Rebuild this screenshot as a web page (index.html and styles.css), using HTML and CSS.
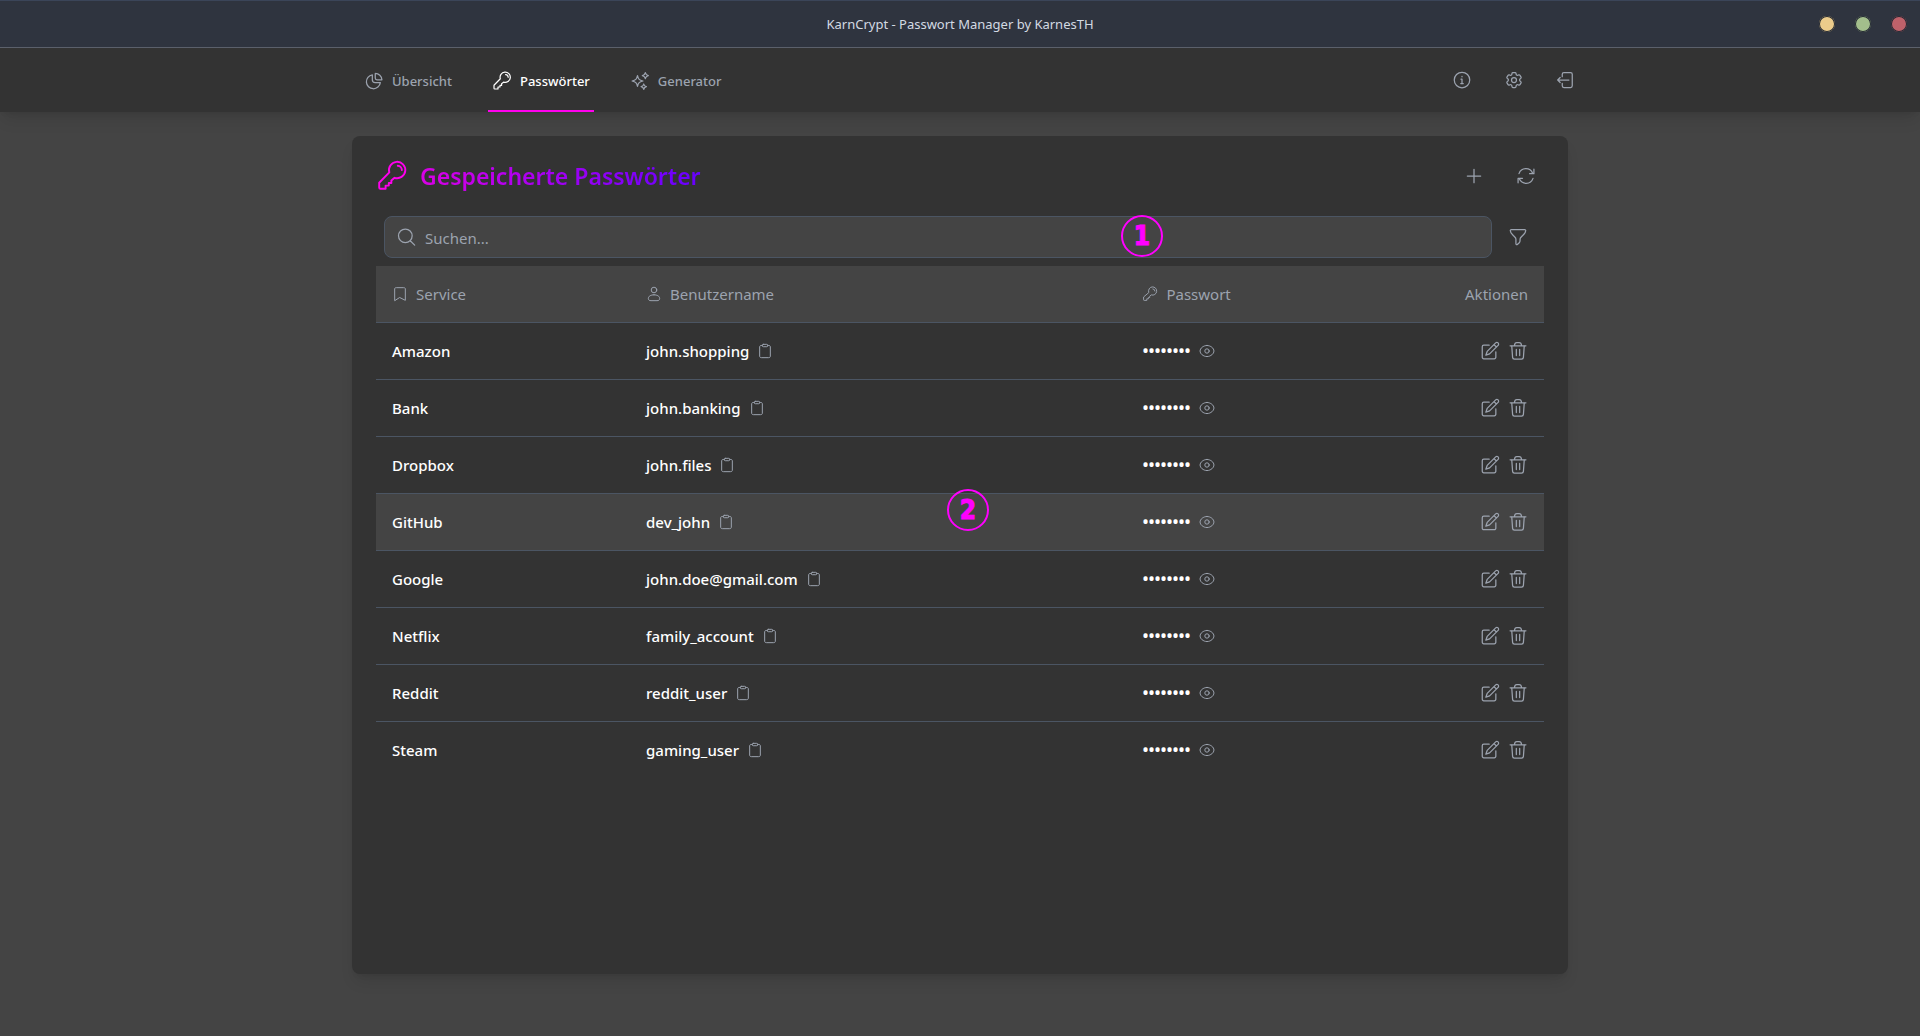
FILE: index.html
```html
<!DOCTYPE html>
<html lang="de">
<head>
<meta charset="utf-8">
<title>KarnCrypt - Passwort Manager by KarnesTH</title>
<link rel="stylesheet" href="styles.css">
</head>
<body>
<svg class="sprite" aria-hidden="true">
  <symbol id="pie" viewBox="0 0 24 24"><path d="M10 4.6a8.4 8.4 0 1 0 9.6 9.4h-6.2c-2.400 0-3.400-1-3.400-3.400Z"/><path d="M13.500 3v5.500c0 1.400.6 2 2 2h6A8 8 0 0 0 13.500 3Z"/></symbol>
  <symbol id="key" viewBox="-0.5 -0.5 25 25"><path d="M9.900 9.200A6.400 6.400 0 1 1 14 13.400L11.500 15.500V17.500H9.500V19.500H7V22H3A1 1 0 0 1 2 21V17.300Z"/><path d="M16.500 4A3.400 3.400 0 0 1 19.700 7.400"/></symbol>
  <symbol id="sparkles" viewBox="0 0 24 24"><path d="M9 5.500c1 4.300 2.200 5.500 6.500 6.500-4.300 1-5.500 2.200-6.500 6.500-1-4.300-2.200-5.500-6.500-6.500 4.300-1 5.500-2.200 6.500-6.500Z"/><path d="M18.400 2c.5 2.300 1.300 3.100 3.600 3.600-2.300.5-3.100 1.300-3.600 3.600-.5-2.300-1.300-3.100-3.600-3.600 2.300-.5 3.100-1.300 3.600-3.600Z"/><path d="M16.500 15.600c.4 2.100 1.100 2.800 3.200 3.200-2.100.4-2.800 1.100-3.200 3.200-.4-2.100-1.100-2.800-3.200-3.200 2.100-.4 2.800-1.100 3.200-3.200Z"/></symbol>
  <symbol id="info" viewBox="0 0 24 24"><circle cx="12" cy="12" r="9.300"/><path d="M10.800 11H12v5M10.500 16.200h3M12 7.500v.6"/></symbol>
  <symbol id="gear" viewBox="0 0 24 24"><path d="M9.594 3.940c.09-.542.56-.94 1.110-.94h2.593c.55 0 1.020.398 1.110.94l.213 1.281c.063.374.313.686.645.87.074.04.147.083.22.127.325.196.72.257 1.075.124l1.217-.456a1.125 1.125 0 0 1 1.370.49l1.296 2.247a1.125 1.125 0 0 1-.26 1.431l-1.003.827c-.293.241-.438.613-.43.992a7.723 7.723 0 0 1 0 .255c-.008.378.137.75.43.991l1.004.827c.424.35.534.955.26 1.430l-1.298 2.247a1.125 1.125 0 0 1-1.369.491l-1.217-.456c-.355-.133-.75-.072-1.076.124a6.470 6.470 0 0 1-.22.128c-.331.183-.581.495-.644.869l-.213 1.281c-.09.543-.56.94-1.110.94h-2.594c-.55 0-1.019-.398-1.110-.94l-.213-1.281c-.062-.374-.312-.686-.644-.87a6.520 6.520 0 0 1-.22-.127c-.325-.196-.72-.257-1.076-.124l-1.217.456a1.125 1.125 0 0 1-1.369-.49l-1.297-2.247a1.125 1.125 0 0 1 .26-1.431l1.004-.827c.292-.24.437-.613.43-.991a6.932 6.932 0 0 1 0-.255c.007-.38-.138-.751-.43-.992l-1.004-.827a1.125 1.125 0 0 1-.26-1.430l1.297-2.247a1.125 1.125 0 0 1 1.370-.491l1.216.456c.356.133.751.072 1.076-.124.072-.044.146-.086.22-.128.332-.183.582-.495.644-.869l.214-1.280Z"/><circle cx="12" cy="12" r="3"/></symbol>
  <symbol id="logout" viewBox="0 0 24 24"><path d="M7.500 8V5a2 2 0 0 1 2-2h8a2 2 0 0 1 2 2v14a2 2 0 0 1-2 2h-8a2 2 0 0 1-2-2v-3M15.500 12H2M5 9l-3 3 3 3"/></symbol>
  <symbol id="plus" viewBox="0 0 24 24"><path d="M12 4v16M4 12h16"/></symbol>
  <symbol id="refresh" viewBox="0 0 24 24"><path d="M16.300 9.200H21.500V3.800M2.500 20.200v-5.400H7.800M3.600 9.200A8.800 8.800 0 0 1 20 8.600M20.400 14.800A8.800 8.800 0 0 1 4 15.400"/></symbol>
  <symbol id="search" viewBox="0 0 24 24"><circle cx="10" cy="10.600" r="8.200"/><path d="M15.900 16.500l5.300 5.300"/></symbol>
  <symbol id="filter" viewBox="0 0 24 24"><path d="M4 3h16c.8 0 1.300.6 1.300 1.300 0 2.700-1.300 3.600-4.300 6.500-1.400 1.300-2.500 2-2.500 3.700 0 2.500.2 3.500-1 4.500l-2.300 2c-.8.6-1.700.2-1.700-.8v-5.700c0-1.700-1.100-2.400-2.500-3.700C4 7.900 2.700 7 2.700 4.300 2.700 3.600 3.200 3 4 3Z"/></symbol>
  <symbol id="bookmark" viewBox="0 0 24 24"><path d="M4 21.500V4.500c0-1.500.8-2 2.500-2h11c1.700 0 2.500.5 2.500 2v17l-8-4Z"/></symbol>
  <symbol id="user" viewBox="0 0 24 24"><circle cx="12" cy="6" r="4.200"/><path d="M12 13.200c5 0 8.500 2.300 8.500 5.400 0 2.500-1.500 3.400-4 3.400h-9c-2.500 0-4-.9-4-3.400 0-3.100 3.500-5.400 8.500-5.400Z"/></symbol>
  <symbol id="clipboard" viewBox="0 0 24 24"><path d="M8 3.700H6.200C4.800 3.700 4 4.500 4 6v13.500C4 21.200 4.800 22 6.500 22h11c1.700 0 2.500-.8 2.500-2.500V6c0-1.500-.8-2.300-2.200-2.300H16"/><rect x="8" y="2" width="8" height="3.600" rx="1.400"/></symbol>
  <symbol id="eye" viewBox="0 0 24 24"><path d="M12 3.700c5.800 0 10.400 4.400 10.400 8.300S17.800 20.300 12 20.300 1.600 15.900 1.600 12 6.200 3.700 12 3.700Z"/><circle cx="12" cy="12" r="3.300"/></symbol>
  <symbol id="edit" viewBox="0 0 24 24"><path d="M11 5H4.500A1.800 1.800 0 0 0 2.700 6.800V19.500A1.800 1.800 0 0 0 4.500 21.300H17.200A1.800 1.800 0 0 0 19 19.500V13"/><path d="M18.800 2.300a2 2 0 0 1 2.900 2.900L11.500 15.400 7 17l1.600-4.500ZM16.800 4.300l2.900 2.900"/></symbol>
  <symbol id="trash" viewBox="0 0 24 24"><path d="M2.500 5.700h19M4.500 5.700l1 14c.1 1.300.8 2 2.200 2h8.600c1.400 0 2.100-.7 2.200-2l1-14M7.700 5.500C8 3 9 2 10.500 2h3c1.500 0 2.500 1 2.800 3.500M10 10v7.500M14 10v7.500"/></symbol>
</svg>

<header class="titlebar">
  <span class="titlebar-text">KarnCrypt - Passwort Manager by KarnesTH</span>
  <div class="window-controls">
    <button class="dot dot-yellow" aria-label="Minimieren"></button>
    <button class="dot dot-green" aria-label="Maximieren"></button>
    <button class="dot dot-red" aria-label="Schließen"></button>
  </div>
</header>

<nav class="navbar">
  <div class="navbar-inner">
    <div class="tabs">
      <a class="tab" href="#uebersicht"><svg class="icon"><use href="#pie"/></svg>Übersicht</a>
      <a class="tab tab-active" href="#passwoerter" aria-current="page"><svg class="icon"><use href="#key"/></svg>Passwörter</a>
      <a class="tab" href="#generator"><svg class="icon"><use href="#sparkles"/></svg>Generator</a>
    </div>
    <div class="tools">
      <button class="icon-button" aria-label="Info"><svg class="icon"><use href="#info"/></svg></button>
      <button class="icon-button" aria-label="Einstellungen"><svg class="icon"><use href="#gear"/></svg></button>
      <button class="icon-button" aria-label="Abmelden"><svg class="icon"><use href="#logout"/></svg></button>
    </div>
  </div>
</nav>

<main class="panel">
  <div class="panel-header">
    <svg class="icon icon-large"><use href="#key"/></svg>
    <h1 class="panel-title">Gespeicherte Passwörter</h1>
    <div class="tools">
      <button class="icon-button" aria-label="Hinzufügen"><svg class="icon"><use href="#plus"/></svg></button>
      <button class="icon-button" aria-label="Aktualisieren"><svg class="icon"><use href="#refresh"/></svg></button>
    </div>
  </div>

  <div class="search-row">
    <label class="search"><svg class="icon"><use href="#search"/></svg><input class="search-input" type="text" placeholder="Suchen..." aria-label="Suchen"></label>
    <button class="icon-button" aria-label="Filtern"><svg class="icon"><use href="#filter"/></svg></button>
    <span class="marker marker-search">1</span>
  </div>

  <div class="table-wrap">
    <table class="table">
      <thead>
        <tr>
          <th class="col-service"><span class="cell"><svg class="icon icon-small"><use href="#bookmark"/></svg>Service</span></th>
          <th class="col-user"><span class="cell"><svg class="icon icon-small"><use href="#user"/></svg>Benutzername</span></th>
          <th class="col-password"><span class="cell"><svg class="icon icon-small"><use href="#key"/></svg>Passwort</span></th>
          <th><span class="cell cell-end">Aktionen</span></th>
        </tr>
      </thead>
      <tbody id="entries"></tbody>
    </table>
    <span class="marker marker-row">2</span>
  </div>
</main>
<script src="app.js"></script>
</body>
</html>
```
FILE: styles.css
```css
* {
  box-sizing: border-box;
}

body {
  margin: 0;
  min-height: 100vh;
  display: flex;
  flex-direction: column;
  background: #444;
  color: #fff;
  font-family: "Noto Sans", sans-serif;
  font-size: 15px;
  line-height: 24px;
}

button {
  padding: 0;
  border: 0;
  background: none;
  color: inherit;
  cursor: pointer;
}

.sprite {
  display: none;
}

.icon {
  display: block;
  flex: none;
  width: 20px;
  height: 20px;
  fill: none;
  stroke: currentColor;
  stroke-width: 1.5;
  stroke-linecap: round;
  stroke-linejoin: round;
}

.icon-small {
  width: 16px;
  height: 16px;
}

.icon-large {
  width: 32px;
  height: 32px;
  color: #f0e;
}

.titlebar {
  display: grid;
  grid-template-columns: 1fr auto 1fr;
  align-items: center;
  height: 48px;
  padding: 0 13px;
  background: #2f343f;
  border-top: 1px solid #3b4559;
  border-bottom: 1px solid #5c616c;
  color: #d3dae3;
  font-size: 13px;
}

.titlebar-text {
  grid-column: 2;
}

.window-controls {
  display: flex;
  justify-content: flex-end;
  gap: 20px;
}

.dot {
  width: 16px;
  height: 16px;
  border-radius: 50%;
  box-shadow: inset 0 0 0 1px #232832;
}

.dot-yellow {
  background: #ebcb8b;
}

.dot-green {
  background: #a3be8c;
}

.dot-red {
  background: #bf616a;
}

.navbar {
  background: #333;
  box-shadow: 0 10px 15px -3px #0000001a, 0 4px 6px -4px #0000001a;
}

.navbar-inner {
  display: flex;
  align-items: center;
  justify-content: space-between;
  height: 64px;
  width: 100%;
  max-width: 1248px;
  margin: 0 auto;
  padding-left: 24px;
  color: #9ca3af;
}

.tabs {
  display: flex;
  align-self: stretch;
  gap: 32px;
}

.tab {
  display: flex;
  align-items: center;
  gap: 8px;
  padding: 4px 4px 0;
  border-bottom: 2px solid transparent;
  color: inherit;
  font-size: 13px;
  font-weight: 500;
  text-decoration: none;
}

.tab-active {
  border-color: #f0e;
  color: #fff;
}

.tools {
  display: flex;
  gap: 16px;
}

.icon-button {
  padding: 8px;
  color: #9ca3af;
}

.panel {
  flex: 1;
  width: calc(100% - 48px);
  max-width: 1216px;
  margin: 24px auto 62px;
  padding: 24px;
  background: #333;
  border-radius: 8px;
  box-shadow: 0 10px 15px -3px #0000001a, 0 4px 6px -4px #0000001a;
}

.panel-header {
  display: flex;
  align-items: center;
  height: 32px;
}

.panel-header .tools {
  margin-left: auto;
}

.panel-title {
  margin: 0 0 0 12px;
  font-size: 23px;
  line-height: 32px;
  font-weight: 600;
  color: transparent;
  background: linear-gradient(to right, #d900e6, #60f);
  background-clip: text;
}

.search-row {
  position: relative;
  display: flex;
  align-items: center;
  gap: 8px;
  margin: 24px 0 8px;
  padding: 0 8px;
}

.search {
  display: flex;
  align-items: center;
  gap: 8px;
  flex: 1;
  height: 42px;
  padding: 0 12px;
  border: 1px solid #4b5563;
  border-radius: 8px;
  background: #444;
  color: #9ca3af;
}

.search-input {
  flex: 1;
  padding: 1px 0 0;
  border: 0;
  outline: 0;
  background: none;
  color: #fff;
  font: inherit;
}

.search-input::placeholder {
  color: #9ca3af;
  opacity: 1;
}

.table-wrap {
  position: relative;
}

.table {
  width: 100%;
  table-layout: fixed;
  border-collapse: separate;
  border-spacing: 0;
}

.col-service {
  width: 21.75%;
}

.col-user {
  width: 42.5%;
}

.col-password {
  width: 22%;
}

th,
td {
  padding: 16px;
  border-bottom: 1px solid #4b5563;
  text-align: left;
  font-weight: 500;
}

th {
  background: #444;
  color: #9ca3af;
  font-weight: 400;
}

tbody tr:last-child td {
  border-bottom: 0;
}

.row-hover td {
  background: #444;
}

.cell {
  display: flex;
  align-items: center;
  gap: 8px;
}

.cell-end {
  justify-content: flex-end;
}

.cell button {
  color: #9ca3af;
}

.masked {
  font-size: 16px;
  font-weight: 600;
}

.marker {
  position: absolute;
  display: grid;
  place-items: center;
  width: 42px;
  height: 42px;
  border: 2px solid #f0f;
  border-radius: 50%;
  color: #f0f;
  font-family: "DejaVu Sans Condensed", "DejaVu Sans", sans-serif;
  font-size: 26px;
  font-weight: 700;
  line-height: 26px;
  -webkit-text-stroke: 1px #f0f;
  pointer-events: none;
}

.marker-search {
  left: 745px;
  top: -1px;
}

.marker-row {
  left: 571px;
  top: 223px;
}
```
FILE: app.js
```js
const entries = [
  ["Amazon", "john.shopping"],
  ["Bank", "john.banking"],
  ["Dropbox", "john.files"],
  ["GitHub", "dev_john"],
  ["Google", "john.doe@gmail.com"],
  ["Netflix", "family_account"],
  ["Reddit", "reddit_user"],
  ["Steam", "gaming_user"],
];

const button = (name, label, small) =>
  `<button aria-label="${label}"><svg class="icon${small ? " icon-small" : ""}"><use href="#${name}"/></svg></button>`;

document.getElementById("entries").innerHTML = entries
  .map(([service, user]) => `
    <tr${service === "GitHub" ? ' class="row-hover"' : ""}>
      <td>${service}</td>
      <td><span class="cell">${user}${button("clipboard", "Kopieren", true)}</span></td>
      <td><span class="cell masked">••••••••${button("eye", "Anzeigen", true)}</span></td>
      <td><span class="cell cell-end">${button("edit", "Bearbeiten")}${button("trash", "Löschen")}</span></td>
    </tr>`)
  .join("");
```
